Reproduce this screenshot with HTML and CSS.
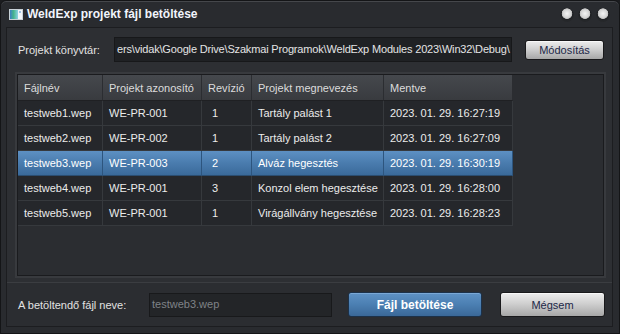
FILE: index.html
```html
<!DOCTYPE html>
<html lang="hu">
<head>
    <meta charset="UTF-8">
    <meta name="viewport" content="width=device-width, initial-scale=1.0">
    <title>WeldExp projekt fájl betöltése</title>
    <link rel="stylesheet" href="styles.css">
</head>
<body>
    <div class="window">
        <div class="titlebar">
            <svg class="app-icon" width="14" height="11" viewBox="0 0 14 11">
                <defs>
                    <linearGradient id="ico" x1="0" y1="0" x2="1" y2="0">
                        <stop offset="0" stop-color="#3c7fc4"/>
                        <stop offset="0.45" stop-color="#46b58c"/>
                        <stop offset="1" stop-color="#8fd3e6"/>
                    </linearGradient>
                </defs>
                <rect x="0" y="0" width="14" height="11" fill="#c9d2d8"/>
                <rect x="1" y="1" width="8" height="9" fill="url(#ico)"/>
                <rect x="9" y="1" width="4" height="9" fill="#f2f6fa"/>
                <rect x="10" y="2" width="2" height="2" fill="#9fc4e4"/>
            </svg>
            <span class="title">WeldExp projekt fájl betöltése</span>
            <div class="win-buttons">
                <span class="dot"></span>
                <span class="dot"></span>
                <span class="dot"></span>
            </div>
        </div>

        <div class="client">
            <div class="path-row">
                <span class="path-label">Projekt könyvtár:</span>
                <div class="path-field">ers\vidak\Google Drive\Szakmai Programok\WeldExp Modules 2023\Win32\Debug\</div>
                <button type="button" class="btn btn-light btn-modify">Módosítás</button>
            </div>

            <div class="grid-frame">
                <div class="grid">
                    <table>
                        <thead>
                            <tr>
                                <th class="c-file">Fájlnév</th>
                                <th class="c-id">Projekt azonosító</th>
                                <th class="c-rev">Revízió</th>
                                <th class="c-name">Projekt megnevezés</th>
                                <th class="c-saved">Mentve</th>
                            </tr>
                        </thead>
                        <tbody>
                            <tr>
                                <td>testweb1.wep</td>
                                <td>WE-PR-001</td>
                                <td class="rev">1</td>
                                <td>Tartály palást 1</td>
                                <td>2023. 01. 29. 16:27:19</td>
                            </tr>
                            <tr>
                                <td>testweb2.wep</td>
                                <td>WE-PR-002</td>
                                <td class="rev">1</td>
                                <td>Tartály palást 2</td>
                                <td>2023. 01. 29. 16:27:09</td>
                            </tr>
                            <tr class="selected">
                                <td>testweb3.wep</td>
                                <td>WE-PR-003</td>
                                <td class="rev">2</td>
                                <td>Alváz hegesztés</td>
                                <td>2023. 01. 29. 16:30:19</td>
                            </tr>
                            <tr>
                                <td>testweb4.wep</td>
                                <td>WE-PR-001</td>
                                <td class="rev">3</td>
                                <td>Konzol elem hegesztése</td>
                                <td>2023. 01. 29. 16:28:00</td>
                            </tr>
                            <tr>
                                <td>testweb5.wep</td>
                                <td>WE-PR-001</td>
                                <td class="rev">1</td>
                                <td>Virágállvány hegesztése</td>
                                <td>2023. 01. 29. 16:28:23</td>
                            </tr>
                        </tbody>
                    </table>
                </div>
            </div>

            <div class="bottom-bar">
                <span class="name-label">A betöltendő fájl neve:</span>
                <div class="name-field">testweb3.wep</div>
                <button type="button" class="btn btn-blue">Fájl betöltése</button>
                <button type="button" class="btn btn-light btn-cancel">Mégsem</button>
            </div>
        </div>
    </div>
</body>
</html>
```

FILE: styles.css
```css
* {
    box-sizing: border-box;
}

body {
    margin: 0;
    background: #1b1c1f;
    color: #e6e6e6;
    font-family: "Liberation Sans", Arial, sans-serif;
    font-size: 11px;
}

.window {
    width: 620px;
    height: 334px;
    display: flex;
    flex-direction: column;
    background: #292b2f;
    border: 1px solid #141517;
    border-radius: 6px 6px 0 0;
    box-shadow: inset 0 1px 0 #45474b;
}

/* title bar */

.titlebar {
    height: 26px;
    flex: none;
    display: flex;
    align-items: center;
    padding: 0 9px 0 8px;
}

.app-icon {
    flex: none;
    margin-right: 4px;
}

.title {
    color: #f2f5fc;
    font-size: 12px;
    font-weight: bold;
}

.win-buttons {
    margin-left: auto;
    display: flex;
    gap: 4px;
    margin-top: 1px;
}

.dot {
    width: 14px;
    height: 14px;
    border-radius: 50%;
    background: radial-gradient(circle at 50% 40%, #f4f4f4 0, #d4d4d4 4px, #bdbdbd 5px, #1d1f22 5.6px, #25272a 7px);
}

/* client area */

.client {
    flex: 1;
    display: flex;
    flex-direction: column;
    margin: 0 6px 6px 5px;
    background: #2d2f33;
    border: 1px solid #1c1d20;
}

.path-row {
    display: flex;
    align-items: center;
    padding: 9px 8px 0 11px;
}

.path-label {
    width: 96px;
    flex: none;
    color: #e2e2e2;
}

.path-field {
    width: 398px;
    height: 25px;
    flex: none;
    padding: 0 2px;
    line-height: 23px;
    background: #1f2124;
    border: 1px solid #17181a;
    color: #e4e4e4;
    white-space: nowrap;
    overflow: hidden;
    letter-spacing: -0.17px;
}

.btn {
    height: 25px;
    flex: none;
    padding: 0;
    border: 1px solid #19191b;
    border-radius: 3px;
    font-family: inherit;
    font-size: 11px;
    cursor: pointer;
}

.btn-light {
    color: #1c2747;
    background: linear-gradient(#ededed, #d0d0d0 45%, #a7a7a7);
    box-shadow: inset 0 1px 0 #f8f8f8;
}

.btn-blue {
    width: 134px;
    margin-left: 16px;
    color: #fff;
    font-size: 12px;
    font-weight: bold;
    border-color: #1c3149;
    background: linear-gradient(#5f92c5, #4b7fb2 50%, #3a6898);
    box-shadow: inset 0 1px 0 #7aa8d6;
}

.btn-modify {
    width: 79px;
    height: 20px;
    margin-left: 13px;
}

.btn-cancel {
    width: 105px;
    margin-left: 18px;
}

/* grid */

.grid-frame {
    height: 206px;
    margin: 10px 6px 0 8px;
    padding: 2px;
    background: #383a3e;
}

.grid {
    height: 100%;
    background: #2b2d31;
    border: 1px solid #1a1b1e;
    overflow: hidden;
}

table {
    width: 495px;
    table-layout: fixed;
    border-collapse: separate;
    border-spacing: 0;
}

th, td {
    padding: 0 6px;
    text-align: left;
    font-weight: normal;
    white-space: nowrap;
    overflow: hidden;
}

th {
    height: 26px;
    color: #dcdcdc;
    background: linear-gradient(#45484d, #393b3f);
    border-right: 1px solid #2b2d31;
    border-bottom: 1px solid #1f2023;
}

td {
    height: 25px;
    color: #ececec;
    background: #25272b;
    border-right: 1px solid #36393d;
    border-bottom: 1px solid #36393d;
}

td.rev {
    padding-left: 10px;
}

.c-file { width: 85px; }
.c-id { width: 99px; }
.c-rev { width: 50px; }
.c-name { width: 132px; }
.c-saved { width: 129px; }

.selected td {
    color: #fff;
    background: linear-gradient(#5d90c3, #4a7cae 50%, #3a6a9a);
    border-right-color: #2d557e;
    border-bottom-color: #2b4d70;
}

/* bottom bar */

.bottom-bar {
    flex: 1;
    display: flex;
    align-items: center;
    margin-top: 4px;
    padding: 0 7px 0 11px;
    background: #2b2d31;
    border-top: 1px solid #3b3d41;
}

.name-label {
    width: 131px;
    flex: none;
    color: #e2e2e2;
}

.name-field {
    width: 183px;
    height: 24px;
    flex: none;
    padding: 0 2px;
    line-height: 20px;
    background: #232528;
    border: 1px solid #18191b;
    color: #7f8287;
}
```
